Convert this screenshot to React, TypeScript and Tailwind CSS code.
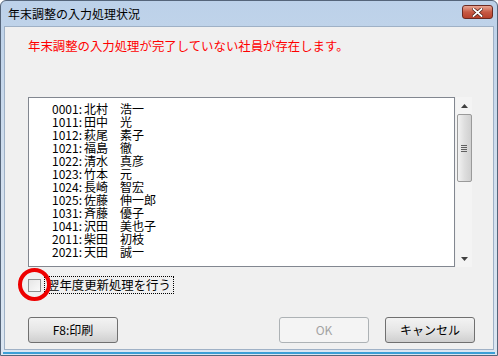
import React from 'react'

const employees: [string, string, string][] = [
  ['0001', '北村', '浩一'],
  ['1011', '田中', '光'],
  ['1012', '萩尾', '素子'],
  ['1021', '福島', '徹'],
  ['1022', '清水', '真彦'],
  ['1023', '竹本', '元'],
  ['1024', '長崎', '智宏'],
  ['1025', '佐藤', '伸一郎'],
  ['1031', '斉藤', '優子'],
  ['1041', '沢田', '美也子'],
  ['2011', '柴田', '初枝'],
  ['2021', '天田', '誠一'],
]

const font = { fontFamily: '"Noto Sans CJK JP", "Noto Sans", sans-serif' }

function CloseButton() {
  return (
    <div className="w-[31px] h-[14px] rounded-[3px] border border-[#6b2a22] bg-gradient-to-b from-[#e8a693] via-[#c75a45] to-[#b8412c] flex items-center justify-center">
      <svg width="11" height="9" viewBox="0 0 11 9">
        <path d="M1.5 1 L9.5 8 M9.5 1 L1.5 8" stroke="#4a1a12" strokeWidth="3.2" strokeLinecap="square" />
        <path d="M1.5 1 L9.5 8 M9.5 1 L1.5 8" stroke="#ffffff" strokeWidth="1.8" strokeLinecap="square" />
      </svg>
    </div>
  )
}

function Scrollbar() {
  return (
    <div className="w-[16px] h-[170px] bg-[#f4f4f4] flex flex-col items-center">
      <div className="h-[17px] flex items-center justify-center">
        <svg width="7" height="4" viewBox="0 0 7 4">
          <path d="M0 4 L3.5 0 L7 4 Z" fill="#404040" />
        </svg>
      </div>
      <div className="w-[15px] h-[68px] rounded-[2px] border border-[#9a9a9a] bg-gradient-to-r from-[#f2f2f2] via-[#dedede] to-[#d0d0d0] flex flex-col items-center justify-center gap-[1px]">
        <div className="w-[6px] h-[1px] bg-[#606060]" />
        <div className="w-[6px] h-[1px] bg-[#606060]" />
        <div className="w-[6px] h-[1px] bg-[#606060]" />
        <div className="w-[6px] h-[1px] bg-[#606060]" />
      </div>
      <div className="flex-1" />
      <div className="h-[17px] flex items-center justify-center">
        <svg width="7" height="4" viewBox="0 0 7 4">
          <path d="M0 0 L7 0 L3.5 4 Z" fill="#404040" />
        </svg>
      </div>
    </div>
  )
}

function Button({ label, disabled }: { label: string; disabled?: boolean }) {
  return (
    <div
      className={
        disabled
          ? 'w-[90px] h-[26px] rounded-[3px] border border-[#adb2b5] bg-[#f4f4f4] flex items-center justify-center text-[12px] text-[#a3a3a3]'
          : 'w-[90px] h-[26px] rounded-[3px] border border-[#707070] bg-gradient-to-b from-[#f3f3f3] via-[#e6e6e6] to-[#cfcfcf] flex items-center justify-center text-[12px] text-black'
      }
    >
      {label}
    </div>
  )
}

export default function App() {
  return (
    <div
      className="w-[498px] h-[356px] rounded-t-[6px] border border-[#55657a] bg-gradient-to-b from-[#bcd1e9] via-[#d2dfee] to-[#dbe6f2] flex flex-col overflow-hidden"
      style={font}
    >
      <div className="h-[25px] flex items-start justify-between pl-[7px] pr-[4px]">
        <span className="text-[12px] leading-[25px] text-black">年末調整の入力処理状況</span>
        <div className="mt-[4px]">
          <CloseButton />
        </div>
      </div>
      <div className="mx-[3px] h-[324px] border border-[#9fb1c6] bg-[#f0f0f0] flex flex-col pl-[23px]">
        <div className="mt-[11px] text-[12.4px] leading-[16px] text-[#ff0000]">
          年末調整の入力処理が完了していない社員が存在します。
        </div>
        <div className="mt-[43px] flex gap-[1px]">
          <div className="w-[427px] h-[170px] border border-[#828790] bg-white pt-[4px] pl-[23px]">
            {employees.map(([code, sur, given]) => (
              <div key={code} className="flex text-[12px] leading-[13px] h-[13px] text-black whitespace-nowrap">
                <span className="w-[32px]">{code}:</span>
                <span className="w-[36px]">{sur}</span>
                <span>{given}</span>
              </div>
            ))}
          </div>
          <Scrollbar />
        </div>
        <div className="relative mt-[9px] flex items-center h-[18px]">
          <div className="w-[13px] h-[13px] border border-[#8e8f8f] bg-gradient-to-br from-[#e6e6e6] to-[#fafafa]" />
          <div className="ml-[3px] h-[18px] px-[2px] border border-dotted border-black text-[12.4px] leading-[16px] text-black">
            翌年度更新処理を行う
          </div>
          <div className="absolute left-[-10px] top-[-8px] w-[33px] h-[33px] rounded-full border-[4px] border-[#ee0000]" />
        </div>
        <div className="mt-[23px] flex">
          <Button label="F8:印刷" />
          <div className="ml-[161px]">
            <Button label="OK" disabled />
          </div>
          <div className="ml-[16px]">
            <Button label="キャンセル" />
          </div>
        </div>
      </div>
      <div className="mx-[2px] mt-[2px] h-[2px] bg-[#3b9fd6]" />
    </div>
  )
}
